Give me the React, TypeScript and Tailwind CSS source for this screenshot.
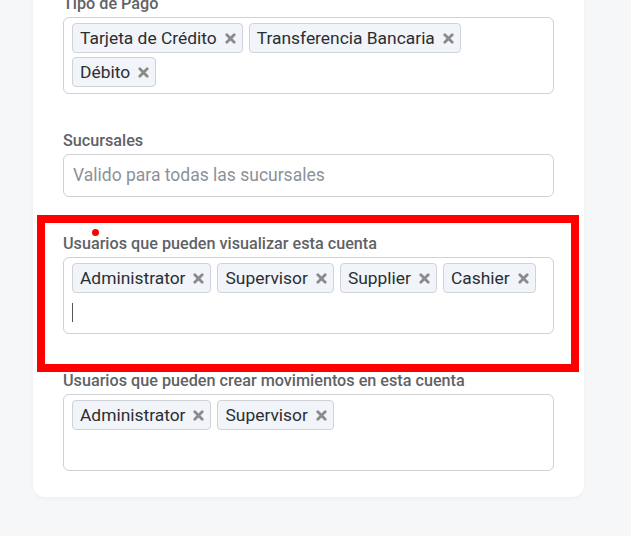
import React from "react";

function XIcon() {
  return (
    <svg width="11" height="11" viewBox="0 0 11 11" className="ml-[8px] shrink-0">
      <path d="M1.8 1.8 L9.2 9.2 M9.2 1.8 L1.8 9.2" stroke="#8a8a8a" strokeWidth="2.8" strokeLinecap="round" />
    </svg>
  );
}

function Tag({ label }: { label: string }) {
  return (
    <div className="flex h-[30px] items-center rounded-[4px] border border-[#cfd2d6] bg-[#f1f4f8] pl-[7px] pr-[6px] text-[17.4px] text-[#2a2e33]">
      <span>{label}</span>
      <XIcon />
    </div>
  );
}

function TagBox({ tags, caret, placeholder }: { tags: string[]; caret?: boolean; placeholder?: string }) {
  return (
    <div className="flex flex-wrap gap-x-[6px] gap-y-[4px] rounded-[6px] border border-[#cfd1d4] bg-white pt-[5px] pb-[6px] pl-[8px] pr-[7px]">
      {tags.map((t) => (
        <Tag key={t} label={t} />
      ))}
      <div className="flex h-[30px] min-w-[240px] flex-1 items-center pl-0">
        {caret && <div className="h-[19px] w-[1px] bg-[#555]" />}
        {placeholder && <span className="pl-[1px] text-[17.5px] text-[#8b9199]">{placeholder}</span>}
      </div>
    </div>
  );
}

function Label({ children }: { children: React.ReactNode }) {
  return <div className="mb-[3px] text-[16.2px] font-medium leading-5 text-[#5f6266]">{children}</div>;
}

export default function App() {
  return (
    <div className="min-h-[536px] overflow-hidden bg-[#f6f7f9] pl-[33px]" style={{ fontFamily: "Roboto, 'Noto Sans', sans-serif" }}>
      <div className="w-[551px] rounded-b-[12px] bg-white px-[30px] pb-[26px] shadow-[0_1px_4px_rgba(0,0,0,0.04)]">
        <div className="-mt-[6px]">
          <Label>Tipo de Pago</Label>
          <TagBox tags={["Tarjeta de Crédito", "Transferencia Bancaria", "Débito"]} />
        </div>
        <div className="mt-[37px]">
          <Label>Sucursales</Label>
          <TagBox tags={[]} placeholder="Valido para todas las sucursales" />
        </div>
        <div className="relative mt-[37px]">
          <div className="pointer-events-none absolute -top-[19px] -right-[25px] -bottom-[38px] -left-[26px] border-[8px] border-[#ff0000]" />
          <div className="absolute -top-[5px] left-[29px] h-[7px] w-[7px] rounded-full bg-[#ff0000]" />
          <Label>Usuarios que pueden visualizar esta cuenta</Label>
          <TagBox tags={["Administrator", "Supervisor", "Supplier", "Cashier"]} caret />
        </div>
        <div className="mt-[37px]">
          <Label>Usuarios que pueden crear movimientos en esta cuenta</Label>
          <TagBox tags={["Administrator", "Supervisor"]} />
        </div>
      </div>
    </div>
  );
}
